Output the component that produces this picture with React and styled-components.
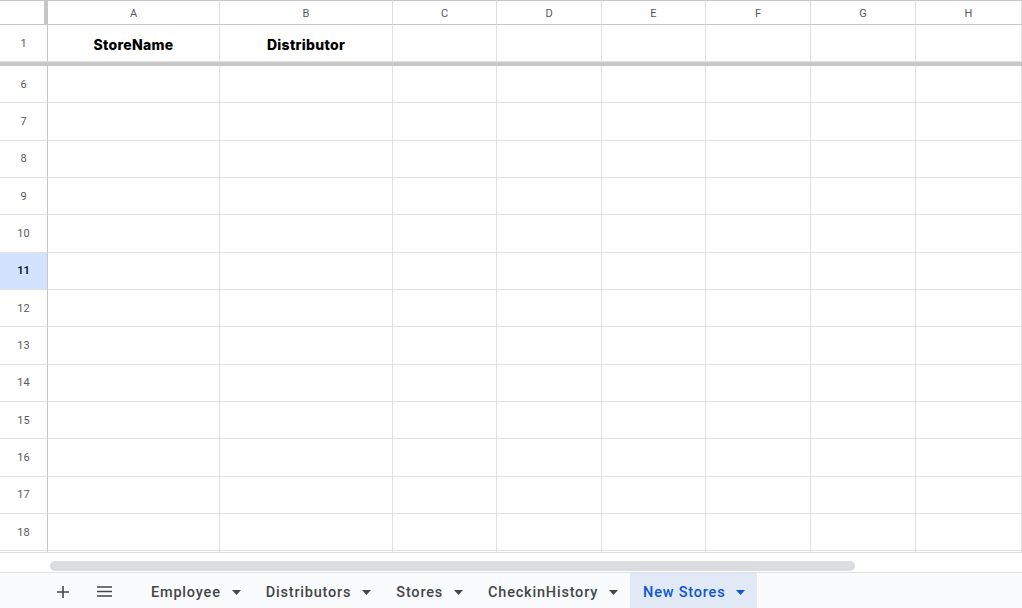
import React from 'react'
import styled, { createGlobalStyle } from 'styled-components'

const GlobalStyle = createGlobalStyle`
  html, body { margin: 0; padding: 0; height: 100%; background: #fff; }
  #root { height: 100%; }
  * { box-sizing: border-box; }
`

const COLS = ['A', 'B', 'C', 'D', 'E', 'F', 'G', 'H']
const WIDTHS = '48px 172px 173px 104px 105px 104px 105px 105px 106px'
const ROWS = [6, 7, 8, 9, 10, 11, 12, 13, 14, 15, 16, 17, 18]
const ACTIVE_ROW = 11
const TABS = ['Employee', 'Distributors', 'Stores', 'CheckinHistory', 'New Stores']
const ACTIVE_TAB = 'New Stores'

const Page = styled.div`
  width: 1022px;
  height: 608px;
  display: flex;
  flex-direction: column;
  overflow: hidden;
  font-family: Roboto, Arial, sans-serif;
`

const Sheet = styled.div`
  flex: 1;
  overflow: hidden;
  display: flex;
  flex-direction: column;
`

const Row = styled.div`
  display: grid;
  grid-template-columns: ${WIDTHS};
  height: ${(p) => p.$h}px;
  flex: none;
`

const Corner = styled.div`
  border-top: 1px solid #c4c7c5;
  border-bottom: 1px solid #c4c7c5;
  border-right: 4px solid #c4c7c5;
  background: #fff;
`

const ColHead = styled.div`
  display: flex;
  align-items: center;
  justify-content: center;
  padding-top: 1px;
  border-top: 1px solid #c4c7c5;
  border-bottom: 1px solid #c4c7c5;
  border-right: 1px solid #dadce0;
  font-size: 11px;
  color: #575a5c;
  background: #fff;
`

const RowHead = styled.div`
  display: flex;
  align-items: center;
  justify-content: center;
  border-right: 1px solid #c4c7c5;
  border-bottom: 1px solid #e1e1e1;
  font-size: 11px;
  background: ${(p) => (p.$active ? '#d3e3fd' : '#fff')};
  color: ${(p) => (p.$active ? '#0b1f3a' : '#575a5c')};
  font-weight: ${(p) => (p.$active ? 700 : 400)};
`

const Cell = styled.div`
  display: flex;
  align-items: center;
  justify-content: center;
  padding-top: 2px;
  border-right: 1px solid #e1e1e1;
  border-bottom: 1px solid #e1e1e1;
  font-family: Inter, 'DejaVu Sans', sans-serif;
  font-weight: 800;
  font-size: 14px;
  letter-spacing: 0.3px;
  color: #000;
`

const FreezeBar = styled.div`
  height: 4px;
  flex: none;
  background: #c7c7c7;
`

const Filler = styled.div`
  flex: 1;
  display: grid;
  grid-template-columns: ${WIDTHS};
`

const FillerCell = styled.div`
  border-right: 1px solid ${(p) => (p.$head ? '#c4c7c5' : '#e1e1e1')};
`

const ScrollStrip = styled.div`
  height: 21px;
  flex: none;
  display: flex;
  align-items: center;
  padding-left: 50px;
  padding-right: 167px;
  border-top: 1px solid #e1e1e1;
  border-bottom: 1px solid #e1e1e1;
  background: #fff;
`

const Thumb = styled.div`
  flex: 1;
  height: 10px;
  margin-top: 6px;
  border-radius: 5px;
  background: #dadce0;
`

const TabBar = styled.div`
  height: 35px;
  flex: none;
  display: flex;
  align-items: stretch;
  background: #f9fbfd;
  padding-left: 49px;
`

const IconButton = styled.div`
  width: 28px;
  display: flex;
  align-items: center;
  justify-content: center;
  padding-top: 2px;
  margin-right: ${(p) => p.$gap || 0}px;
  color: #444746;
`

const Tab = styled.div`
  display: flex;
  align-items: center;
  gap: 11px;
  padding: 3px 12px 0 13px;
  font-size: 14.5px;
  font-weight: 500;
  letter-spacing: 0.8px;
  color: ${(p) => (p.$active ? '#0b57d0' : '#444746')};
  background: ${(p) => (p.$active ? '#e1e9f7' : 'transparent')};
`

const Caret = ({ color }) => (
  <svg width="9" height="5" viewBox="0 0 9 5">
    <path d="M0 0h9L4.5 5z" fill={color} />
  </svg>
)

export default function App() {
  return (
    <>
      <GlobalStyle />
      <Page>
        <Sheet>
          <Row $h={25}>
            <Corner />
            {COLS.map((c) => (
              <ColHead key={c}>{c}</ColHead>
            ))}
          </Row>
          <Row $h={37}>
            <RowHead>1</RowHead>
            <Cell>StoreName</Cell>
            <Cell>Distributor</Cell>
            {COLS.slice(2).map((c) => (
              <Cell key={c} />
            ))}
          </Row>
          <FreezeBar />
          {ROWS.map((r) => (
            <Row key={r} $h={37.35}>
              <RowHead $active={r === ACTIVE_ROW}>{r}</RowHead>
              {COLS.map((c) => (
                <Cell key={c} />
              ))}
            </Row>
          ))}
          <Filler>
            <FillerCell $head />
            {COLS.map((c) => (
              <FillerCell key={c} />
            ))}
          </Filler>
        </Sheet>
        <ScrollStrip>
          <Thumb />
        </ScrollStrip>
        <TabBar>
          <IconButton $gap={13}>
            <svg width="12" height="12" viewBox="0 0 12 12">
              <path d="M6 0v12M0 6h12" stroke="currentColor" strokeWidth="1.6" />
            </svg>
          </IconButton>
          <IconButton $gap={20}>
            <svg width="15" height="11" viewBox="0 0 15 11">
              <path d="M0 1h15M0 5.5h15M0 10h15" stroke="currentColor" strokeWidth="1.6" />
            </svg>
          </IconButton>
          {TABS.map((t) => (
            <Tab key={t} $active={t === ACTIVE_TAB}>
              {t}
              <Caret color={t === ACTIVE_TAB ? '#0b57d0' : '#444746'} />
            </Tab>
          ))}
        </TabBar>
      </Page>
    </>
  )
}
